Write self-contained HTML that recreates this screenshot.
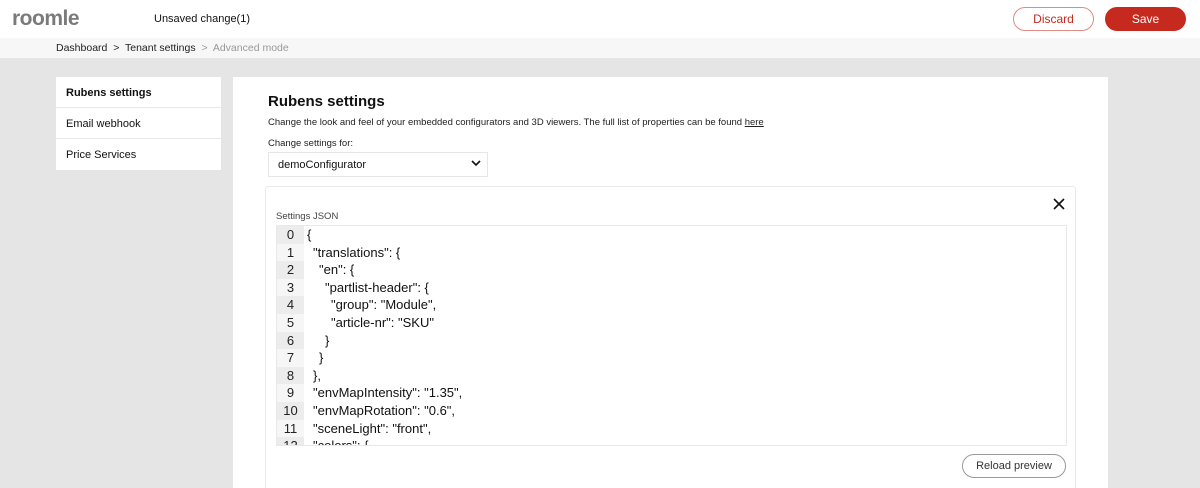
<!DOCTYPE html>
<html><head><style>
*{margin:0;padding:0;box-sizing:border-box}
html,body{width:1200px;height:488px;overflow:hidden}
body{font-family:"Liberation Sans",sans-serif;background:#e5e5e5;color:#111;position:relative}
.hdr{position:absolute;left:0;top:0;width:1200px;height:38px;background:#fff}
.logo{position:absolute;left:12px;top:7px;font-size:21px;font-weight:bold;color:#7a7a7a;letter-spacing:-0.5px}
.uns{position:absolute;left:154px;top:13px;font-size:11px}
.btn{position:absolute;top:7px;height:24px;border-radius:12px;font-size:12px;text-align:center;line-height:22px}
.bc{position:absolute;left:0;top:38px;width:1200px;height:20px;background:#f7f7f7;font-size:10.5px;padding:4px 0 0 56px;color:#222}
.side{position:absolute;left:56px;top:77px;width:165px;background:#fff}
.side div{height:31px;border-bottom:1px solid #e8e8e8;font-size:11px;padding:10px 0 0 10px}
.card{position:absolute;left:233px;top:77px;width:875px;height:411px;background:#fff}
.abs{position:absolute}
</style></head><body>
<div class="hdr">
<div class="logo">roomle</div>
<div class="uns">Unsaved change(1)</div>
<div class="btn" style="left:1013px;width:81px;border:1px solid #e08a84;color:#c9291f">Discard</div>
<div class="btn" style="left:1105px;width:81px;background:#c62a1f;color:#fff;border:1px solid #c62a1f">Save</div>
</div>
<div class="bc">Dashboard &nbsp;&gt;&nbsp; Tenant settings &nbsp;<span style="color:#999">&gt;&nbsp; Advanced mode</span></div>
<div class="side">
<div style="font-weight:bold">Rubens settings</div>
<div>Email webhook</div>
<div style="border:none">Price Services</div>
</div>
<div class="card"></div>
<div class="abs" style="left:268px;top:93px;font-size:15px;font-weight:bold">Rubens settings</div>
<div class="abs" style="left:268px;top:117px;font-size:9.5px;color:#222">Change the look and feel of your embedded configurators and 3D viewers. The full list of properties can be found <u>here</u></div>
<div class="abs" style="left:268px;top:138px;font-size:9.5px;color:#222">Change settings for:</div>
<div class="abs" style="left:268px;top:152px;width:220px;height:25px;border:1px solid #e6e6e6;font-size:11px;padding:6px 0 0 9px">demoConfigurator
<svg style="position:absolute;right:6px;top:6px" width="10" height="8" viewBox="0 0 10 8"><path d="M1 2l4 4 4-4" fill="none" stroke="#111" stroke-width="1.6"/></svg></div>
<div class="abs" style="left:265px;top:186px;width:811px;height:310px;border:1px solid #eaeaea;border-radius:3px"></div>
<svg class="abs" style="left:1053px;top:198px" width="12" height="12" viewBox="0 0 12 12"><path d="M1 1l10 10M11 1L1 11" stroke="#111" stroke-width="1.6"/></svg>
<div class="abs" style="left:276px;top:211px;font-size:9.5px;color:#444">Settings JSON</div>
<div class="abs" style="left:276px;top:225px;width:791px;height:221px;border:1px solid #e8e8e8;overflow:hidden;font-size:13px">
<div id="code"></div>
</div>
<div class="abs" style="left:962px;top:454px;width:104px;height:24px;border:1px solid #999;border-radius:12px;font-size:11px;text-align:center;line-height:22px;color:#333">Reload preview</div>
<script>
var L=[[0,'{'],[1,'"translations": {'],[2,'"en": {'],[3,'"partlist-header": {'],[4,'"group": "Module",'],[4,'"article-nr": "SKU"'],[3,'}'],[2,'}'],[1,'},'],[1,'"envMapIntensity": "1.35",'],[1,'"envMapRotation": "0.6",'],[1,'"sceneLight": "front",'],[1,'"colors": {']];
var h='';L.forEach(function(l,i){h+='<div style="display:flex;height:17.6px;line-height:17.6px"><div style="width:27px;text-align:center;background:'+(i%2?'#f6f6f6':'#ececec')+';color:#222">'+i+'</div><div style="padding-left:'+(3+l[0]*6)+'px">'+l[1]+'</div></div>'});
document.getElementById('code').innerHTML=h;
</script>
</body></html>
